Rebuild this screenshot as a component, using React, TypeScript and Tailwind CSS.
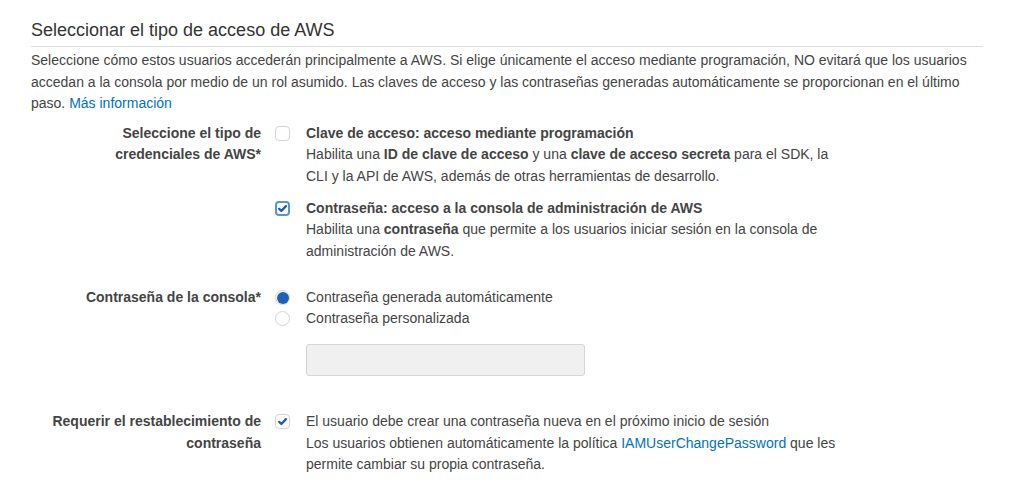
import React from "react";

function Checkbox({ checked, focused }: { checked?: boolean; focused?: boolean }) {
  return (
    <span
      className={
        "flex h-[15px] w-[15px] items-center justify-center rounded-[4px] bg-white " +
        (focused
          ? "border-2 border-[#5b93d3] bg-[#f4f8fd]"
          : "border border-[#d2d4d6]")
      }
    >
      {checked && (
        <svg viewBox="0 0 12 12" className="h-[11px] w-[11px]">
          <path
            d="M2.4 6.4 L4.8 8.7 L9.7 3.4"
            fill="none"
            stroke="#1d5fae"
            strokeWidth="2.5"
            strokeLinecap="round"
            strokeLinejoin="round"
          />
        </svg>
      )}
    </span>
  );
}

function Radio({ checked }: { checked?: boolean }) {
  return (
    <span className="flex h-[15px] w-[15px] items-center justify-center rounded-full border border-[#d2d4d6] bg-white">
      {checked && <span className="h-[12px] w-[12px] rounded-full bg-[#1d62b5]" />}
    </span>
  );
}

export default function App() {
  return (
    <div className="min-h-[493px] bg-white font-['Liberation_Sans',Arial,sans-serif] text-[14px] leading-[21.5px] text-[#444]">
      <div className="w-[983px] pl-[31px] pt-[19px]">
        <h2 className="border-b border-[#dcdcdc] pb-[5px] text-[18px] leading-[22px] text-[#333]">
          Seleccionar el tipo de acceso de AWS
        </h2>
        <p className="mt-[3px] pr-[4px]">
          Seleccione cómo estos usuarios accederán principalmente a AWS. Si elige únicamente el acceso mediante
          programación, NO evitará que los usuarios accedan a la consola por medio de un rol asumido. Las claves de
          acceso y las contraseñas generadas automáticamente se proporcionan en el último paso.{" "}
          <a className="text-[#0073bb]">Más información</a>
        </p>

        {/* Tipo de credenciales */}
        <div className="mt-[8px] flex">
          <div className="w-[230px] shrink-0 text-right font-bold">
            Seleccione el tipo de
            <br />
            credenciales de AWS*
          </div>
          <div className="ml-[14px] flex flex-col gap-[10.5px]">
            <div className="flex">
              <div className="pt-[3px]">
                <Checkbox />
              </div>
              <div className="ml-[16px] w-[540px]">
                <div className="font-bold">Clave de acceso: acceso mediante programación</div>
                <div>
                  Habilita una <b>ID de clave de acceso</b> y una <b>clave de acceso secreta</b> para el SDK, la
                  CLI y la API de AWS, además de otras herramientas de desarrollo.
                </div>
              </div>
            </div>
            <div className="flex">
              <div className="pt-[3px]">
                <Checkbox checked focused />
              </div>
              <div className="ml-[16px] w-[540px]">
                <div className="font-bold">Contraseña: acceso a la consola de administración de AWS</div>
                <div>
                  Habilita una <b>contraseña</b> que permite a los usuarios iniciar sesión en la consola de
                  administración de AWS.
                </div>
              </div>
            </div>
          </div>
        </div>

        {/* Contraseña de la consola */}
        <div className="mt-[25px] flex">
          <div className="w-[230px] shrink-0 text-right font-bold">Contraseña de la consola*</div>
          <div className="ml-[14px]">
            <div className="flex items-center leading-[21px]">
              <Radio checked />
              <span className="ml-[16px]">Contraseña generada automáticamente</span>
            </div>
            <div className="flex items-center leading-[21px]">
              <Radio />
              <span className="ml-[16px]">Contraseña personalizada</span>
            </div>
            <div className="ml-[31px] mt-[15px] h-[32px] w-[279px] rounded-[3px] border border-[#d5d5d5] bg-[#f0f0f0]" />
          </div>
        </div>

        {/* Restablecimiento */}
        <div className="mt-[35px] flex">
          <div className="w-[230px] shrink-0 text-right font-bold">
            Requerir el restablecimiento de
            <br />
            contraseña
          </div>
          <div className="ml-[14px] flex">
            <div className="pt-[3px]">
              <Checkbox checked />
            </div>
            <div className="ml-[16px] w-[540px]">
              <div>El usuario debe crear una contraseña nueva en el próximo inicio de sesión</div>
              <div>
                Los usuarios obtienen automáticamente la política{" "}
                <a className="text-[#0073bb]">IAMUserChangePassword</a> que les permite cambiar su propia
                contraseña.
              </div>
            </div>
          </div>
        </div>
      </div>
    </div>
  );
}
